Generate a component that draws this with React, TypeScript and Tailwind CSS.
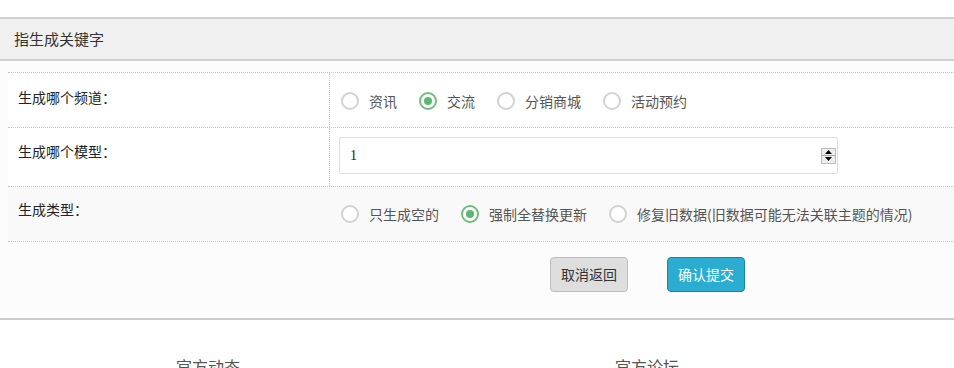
const font = { fontFamily: '"Microsoft YaHei", "Noto Sans CJK SC", sans-serif' };

function Radio({ label, checked }: { label: string; checked?: boolean }) {
	return (
		<label className="flex items-center gap-[10px] text-[14px] text-[#555]">
			<span
				className={`flex size-[18px] items-center justify-center rounded-full border-2 bg-white ${checked ? "border-[#6cc07c]" : "border-[#d2d2d2]"}`}
			>
				{checked ? <span className="size-[8px] rounded-full bg-[#5cb870]" /> : null}
			</span>
			{label}
		</label>
	);
}

export default function App() {
	return (
		<div className="h-[368px] w-[954px] overflow-hidden bg-white" style={font}>
			<div className="h-[17px]" />
			<div className="border-y-2 border-[#cfcfcf] bg-[#f0f0f0]">
				<div className="flex h-[40px] items-center pl-[14px] text-[15px] text-[#333]">指生成关键字</div>
			</div>
			<div className="bg-[#fcfcfc] pt-[11px] pb-[26px] pl-[8px]">
				<div className="border-t border-dotted border-[#c8c8c8]">
					<div className="flex h-[55px] border-b border-dotted border-[#c8c8c8] bg-white">
						<div className="w-[322px] border-r border-dotted border-[#c8c8c8] pt-[14px] pl-[10px] text-[14px] text-[#222]">
							生成哪个频道：
						</div>
						<div className="flex items-center gap-[22px] pt-[2px] pl-[11px]">
							<Radio label="资讯" />
							<Radio label="交流" checked />
							<Radio label="分销商城" />
							<Radio label="活动预约" />
						</div>
					</div>
					<div className="flex h-[59px] border-b border-dotted border-[#c8c8c8] bg-white">
						<div className="w-[322px] border-r border-dotted border-[#c8c8c8] pt-[13px] pl-[10px] text-[14px] text-[#222]">
							生成哪个模型：
						</div>
						<div className="pt-[9px] pl-[9px]">
							<div className="flex h-[37px] w-[499px] items-center justify-between rounded-[2px] border border-[#dedede] bg-white pr-[1px] pl-[10px]">
								<span className="text-[14px] text-[#222]" style={{ fontFamily: '"Liberation Serif", serif' }}>
									1
								</span>
								<span className="flex h-[16px] w-[15px] flex-col border border-[#bbb] bg-[#eee]">
									<span className="flex flex-1 items-center justify-center border-b border-[#aaa]">
										<svg width="7" height="4" viewBox="0 0 7 4">
											<path d="M3.5 0L7 4H0z" fill="#000" />
										</svg>
									</span>
									<span className="flex flex-1 items-center justify-center">
										<svg width="7" height="4" viewBox="0 0 7 4">
											<path d="M0 0h7L3.5 4z" fill="#000" />
										</svg>
									</span>
								</span>
							</div>
						</div>
					</div>
					<div className="flex h-[55px] border-b border-dotted border-[#c8c8c8] bg-[#f9f9f9]">
						<div className="w-[322px] pt-[12px] pl-[10px] text-[14px] text-[#222]">生成类型：</div>
						<div className="flex items-center gap-[22px] pl-[11px]">
							<Radio label="只生成空的" />
							<Radio label="强制全替换更新" checked />
							<Radio label="修复旧数据(旧数据可能无法关联主题的情况)" />
						</div>
					</div>
				</div>
				<div className="mt-[15px] flex gap-[39px] pl-[542px]">
					<button className="h-[35px] w-[78px] rounded-[4px] border border-[#bcbcbc] bg-[#dedede] text-[14px] text-[#333]">
						取消返回
					</button>
					<button className="h-[35px] w-[78px] rounded-[4px] border border-[#1887a6] bg-[#2badd2] text-[14px] text-white">
						确认提交
					</button>
				</div>
			</div>
			<div className="border-t-2 border-[#cccccc]" />
			<div className="flex pt-[34px] text-[16px] text-[#555]">
				<div className="pl-[176px]">官方动态</div>
				<div className="pl-[375px]">官方论坛</div>
			</div>
		</div>
	);
}
